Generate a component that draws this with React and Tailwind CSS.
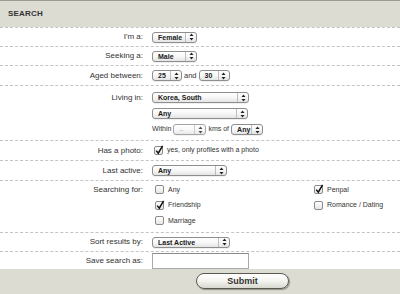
import React from 'react';

const font = { fontFamily: '"Liberation Sans", Arial, sans-serif' };

const Arrows = () => (
    <svg width="5" height="8" viewBox="0 0 5 8">
        <path d="M2.5 0.5 L4.5 3 L0.5 3 Z" fill="#222" />
        <path d="M2.5 7.5 L4.5 5 L0.5 5 Z" fill="#222" />
    </svg>
);

const Select = ({ value, className, muted }) => (
    <div className={`${className} h-[11px] flex items-stretch rounded-[3px] border border-[#8e8e8e] bg-gradient-to-b from-white via-[#f7f7f7] to-[#e4e4e4] shadow-[0_1px_0_rgba(0,0,0,0.06)]`}>
        <span className={`flex-1 pl-[5px] text-[7px] leading-[9px] font-bold whitespace-nowrap overflow-hidden ${muted ? 'text-[#aaa] font-normal' : 'text-[#1a1a1a]'}`}>
            {value}
        </span>
        <span className="w-[11px] border-l border-[#bdbdbd] flex items-center justify-center">
            <Arrows />
        </span>
    </div>
);

const Check = ({ checked }) => (
    <div className="w-[9px] h-[9px] rounded-[2px] border border-[#8a8a8a] bg-gradient-to-b from-white to-[#e6e6e6] relative shrink-0">
        {checked && (
            <svg className="absolute left-[0px] top-[-2px]" width="9" height="10" viewBox="0 0 9 10">
                <path d="M1.2 5.6 L3.3 8.2 L7.6 0.8" stroke="#111" strokeWidth="1.5" fill="none" />
            </svg>
        )}
    </div>
);

const Row = ({ label, className, labelClass = 'items-center', children }) => (
    <div className={`flex border-t border-dashed border-[#c4c4c4] ${className}`}>
        <div className={`w-[144px] flex justify-end pr-[1px] text-[8px] text-[#333] ${labelClass}`}>{label}</div>
        <div className="ml-[8px] flex-1">{children}</div>
    </div>
);

const Opt = ({ label, checked }) => (
    <div className="h-[15.5px] flex items-center gap-[3px]">
        <Check checked={checked} />
        <span className="text-[7px] text-[#333] ml-[1px]">{label}</span>
    </div>
);

export default function App() {
    return (
        <div className="w-[400px] h-[294px] bg-white overflow-hidden" style={font}>
            <div className="h-[27px] bg-[#dddcd3] border-t border-[#9d9c92] flex items-center pl-[8px]">
                <span className="text-[8px] font-bold text-[#333] tracking-[0.2px]">SEARCH</span>
            </div>

            <Row label="I'm a:" className="h-[19px]">
                <div className="h-full flex items-center">
                    <Select value="Female" className="w-[45px]" />
                </div>
            </Row>

            <Row label="Seeking a:" className="h-[19px]">
                <div className="h-full flex items-center">
                    <Select value="Male" className="w-[45px]" />
                </div>
            </Row>

            <Row label="Aged between:" className="h-[20px]">
                <div className="h-full flex items-center">
                    <Select value="25" className="w-[30px]" />
                    <span className="text-[7.5px] text-[#333] mx-[2px]">and</span>
                    <Select value="30" className="w-[31px]" />
                </div>
            </Row>

            <Row label={<span className="h-[11px] flex items-center">Living in:</span>} labelClass="items-start pt-[6px]" className="h-[55px]">
                <div className="pt-[6px] flex flex-col gap-[5px]">
                    <Select value="Korea, South" className="w-[97px]" />
                    <Select value="Any" className="w-[96px]" />
                    <div className="flex items-center">
                        <span className="text-[7px] text-[#333] mr-[2px]">Within</span>
                        <Select value="–" muted className="w-[33px] opacity-80" />
                        <span className="text-[7px] text-[#333] mx-[2px]">kms of</span>
                        <Select value="Any" className="w-[32px]" />
                    </div>
                </div>
            </Row>

            <Row label="Has a photo:" className="h-[20px]">
                <div className="h-full flex items-center gap-[4px] pl-[2px]">
                    <Check checked />
                    <span className="text-[7px] text-[#333]">yes, only profiles with a photo</span>
                </div>
            </Row>

            <Row label="Last active:" className="h-[20px]">
                <div className="h-full flex items-center">
                    <Select value="Any" className="w-[75px]" />
                </div>
            </Row>

            <Row label={<span className="h-[15.5px] flex items-center">Searching for:</span>} labelClass="items-start pt-[1px]" className="h-[52px]">
                <div className="pt-[1px] pl-[3px] grid grid-cols-[159px_1fr]">
                    <Opt label="Any" />
                    <Opt label="Penpal" checked />
                    <Opt label="Friendship" checked />
                    <Opt label="Romance / Dating" />
                    <Opt label="Marriage" />
                </div>
            </Row>

            <Row label="Sort results by:" className="h-[19px]">
                <div className="h-full flex items-center">
                    <Select value="Last Active" className="w-[78px]" />
                </div>
            </Row>

            <Row label="Save search as:" className="h-[18px]">
                <div className="h-full flex items-end">
                    <div className="w-[97px] h-[16px] border border-[#a9a9a9] border-t-[#8a8a8a] bg-white" />
                </div>
            </Row>

            <div className="h-[25px] bg-[#dddcd3] flex items-start pt-[4px] pl-[196px]">
                <button className="w-[93px] h-[16px] rounded-full border border-[#5a5a52] bg-gradient-to-b from-white via-[#f4f4ef] to-[#d8d8d0] shadow-[1px_1px_1px_rgba(0,0,0,0.35)] text-[9px] font-bold text-[#333] leading-none">
                    Submit
                </button>
            </div>
        </div>
    );
}
